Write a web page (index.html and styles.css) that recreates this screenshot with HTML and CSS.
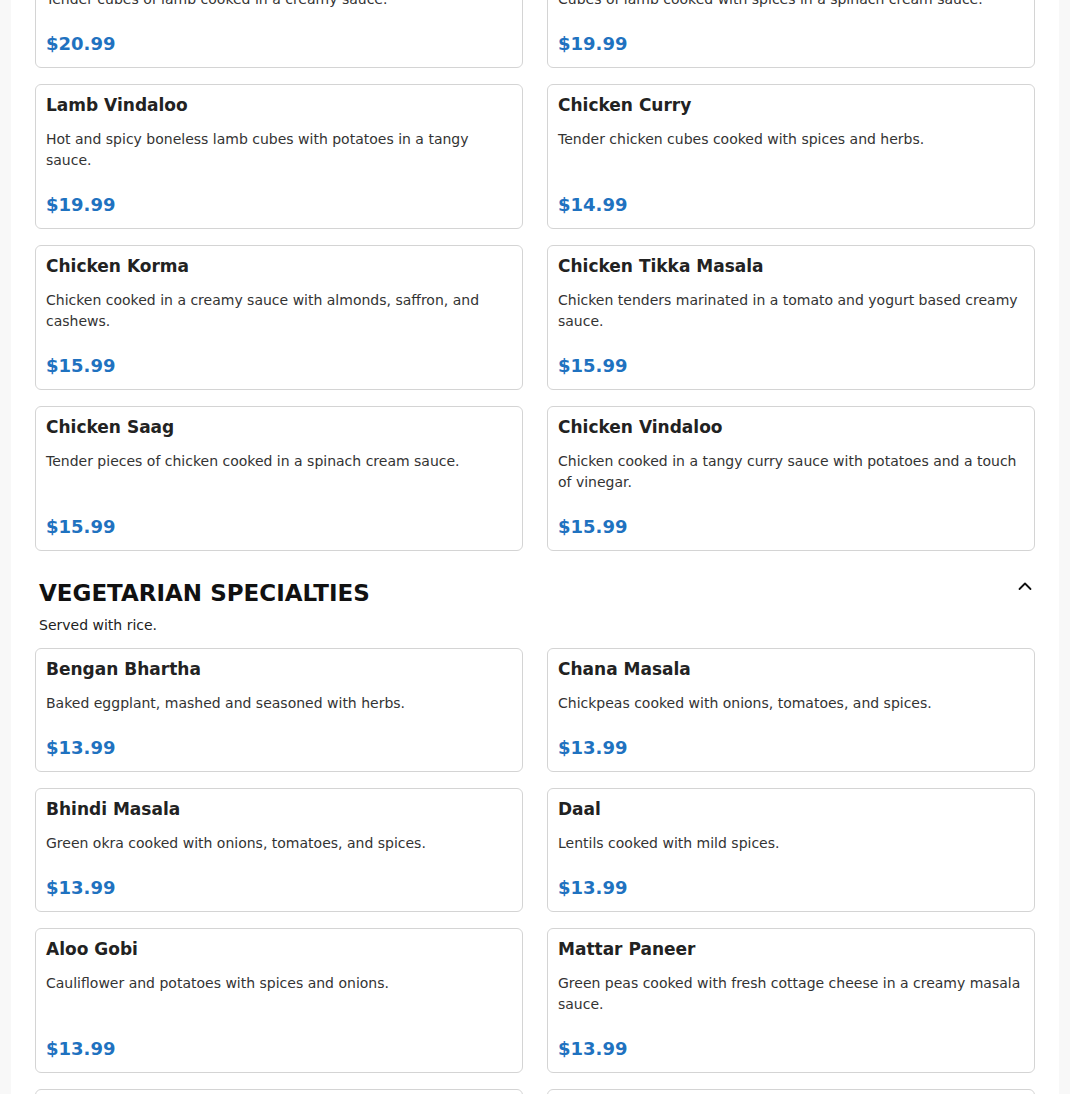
FILE: index.html
```html
<!DOCTYPE html>
<html lang="en">
<head>
<meta charset="utf-8">
<title>Menu</title>
<link rel="stylesheet" href="styles.css">
</head>
<body>
<main class="page">
  <section class="section section-first">
    <div class="grid">
      <article class="card"><h3 class="card-title">Lamb Korma</h3><p class="card-desc">Tender cubes of lamb cooked in a creamy sauce.</p><p class="card-price">$20.99</p></article>
      <article class="card"><h3 class="card-title">Lamb Saag</h3><p class="card-desc">Cubes of lamb cooked with spices in a spinach cream sauce.</p><p class="card-price">$19.99</p></article>
      <article class="card"><h3 class="card-title">Lamb Vindaloo</h3><p class="card-desc">Hot and spicy boneless lamb cubes with potatoes in a tangy sauce.</p><p class="card-price">$19.99</p></article>
      <article class="card"><h3 class="card-title">Chicken Curry</h3><p class="card-desc">Tender chicken cubes cooked with spices and herbs.</p><p class="card-price">$14.99</p></article>
      <article class="card"><h3 class="card-title">Chicken Korma</h3><p class="card-desc">Chicken cooked in a creamy sauce with almonds, saffron, and cashews.</p><p class="card-price">$15.99</p></article>
      <article class="card"><h3 class="card-title">Chicken Tikka Masala</h3><p class="card-desc">Chicken tenders marinated in a tomato and yogurt based creamy sauce.</p><p class="card-price">$15.99</p></article>
      <article class="card"><h3 class="card-title">Chicken Saag</h3><p class="card-desc">Tender pieces of chicken cooked in a spinach cream sauce.</p><p class="card-price">$15.99</p></article>
      <article class="card"><h3 class="card-title">Chicken Vindaloo</h3><p class="card-desc">Chicken cooked in a tangy curry sauce with potatoes and a touch of vinegar.</p><p class="card-price">$15.99</p></article>
    </div>
  </section>

  <section class="section">
    <header class="section-head">
      <h2 class="section-title">VEGETARIAN SPECIALTIES</h2>
      <svg class="chevron" width="14" height="14" viewBox="0 0 14 14" aria-hidden="true"><polyline points="1.5,10 7,4.5 12.5,10" fill="none" stroke="#111" stroke-width="1.8" stroke-linecap="round" stroke-linejoin="round"/></svg>
    </header>
    <p class="section-note">Served with rice.</p>
    <div class="grid">
      <article class="card"><h3 class="card-title">Bengan Bhartha</h3><p class="card-desc">Baked eggplant, mashed and seasoned with herbs.</p><p class="card-price">$13.99</p></article>
      <article class="card"><h3 class="card-title">Chana Masala</h3><p class="card-desc">Chickpeas cooked with onions, tomatoes, and spices.</p><p class="card-price">$13.99</p></article>
      <article class="card"><h3 class="card-title">Bhindi Masala</h3><p class="card-desc">Green okra cooked with onions, tomatoes, and spices.</p><p class="card-price">$13.99</p></article>
      <article class="card"><h3 class="card-title">Daal</h3><p class="card-desc">Lentils cooked with mild spices.</p><p class="card-price">$13.99</p></article>
      <article class="card"><h3 class="card-title">Aloo Gobi</h3><p class="card-desc">Cauliflower and potatoes with spices and onions.</p><p class="card-price">$13.99</p></article>
      <article class="card"><h3 class="card-title">Mattar Paneer</h3><p class="card-desc">Green peas cooked with fresh cottage cheese in a creamy masala sauce.</p><p class="card-price">$13.99</p></article>
      <article class="card"><h3 class="card-title">Saag Paneer</h3><p class="card-desc">Fresh spinach cooked with cottage cheese and spices.</p><p class="card-price">$13.99</p></article>
      <article class="card"><h3 class="card-title">Paneer Tikka Masala</h3><p class="card-desc">Cottage cheese cooked in a tomato and cream sauce.</p><p class="card-price">$14.99</p></article>
    </div>
  </section>
</main>
</body>
</html>
```

FILE: styles.css
```css
html, body {
  margin: 0;
  padding: 0;
}
body {
  background: #f8f8f8;
  font-family: "DejaVu Sans", "Liberation Sans", sans-serif;
  color: #222;
  overflow: hidden;
}
.page {
  max-width: 1048px;
  margin: 0 auto;
  background: #fff;
  padding: 0 24px 40px;
  box-sizing: border-box;
  min-height: 1200px;
}
.section-first {
  margin-top: -56px;
}
.section + .section {
  margin-top: 29px;
}
.section-head {
  display: flex;
  justify-content: space-between;
  align-items: flex-start;
  padding: 0 3px 0 4px;
}
.section-title {
  margin: 0;
  font-size: 23px;
  line-height: 26px;
  font-weight: bold;
  letter-spacing: 0;
  color: #111;
}
.chevron {
  margin-top: -1px;
  flex: none;
}
.section-note {
  margin: 9px 0 12px;
  padding-left: 4px;
  font-size: 14px;
  line-height: 21px;
  color: #222;
}
.grid {
  display: grid;
  grid-template-columns: 1fr 1fr;
  gap: 16px 24px;
}
.card {
  border: 1px solid #d4d4d4;
  border-radius: 6px;
  padding: 10px;
  display: flex;
  flex-direction: column;
  background: #fff;
}
.card-title {
  margin: 0 0 14px;
  font-size: 17px;
  line-height: 20px;
  font-weight: bold;
  color: #222;
}
.card-desc {
  margin: 0 0 21px;
  font-size: 14px;
  line-height: 21px;
  color: #333;
}
.card-price {
  margin: auto 0 0;
  font-size: 18px;
  line-height: 26px;
  font-weight: bold;
  color: #1f72c0;
}
```
